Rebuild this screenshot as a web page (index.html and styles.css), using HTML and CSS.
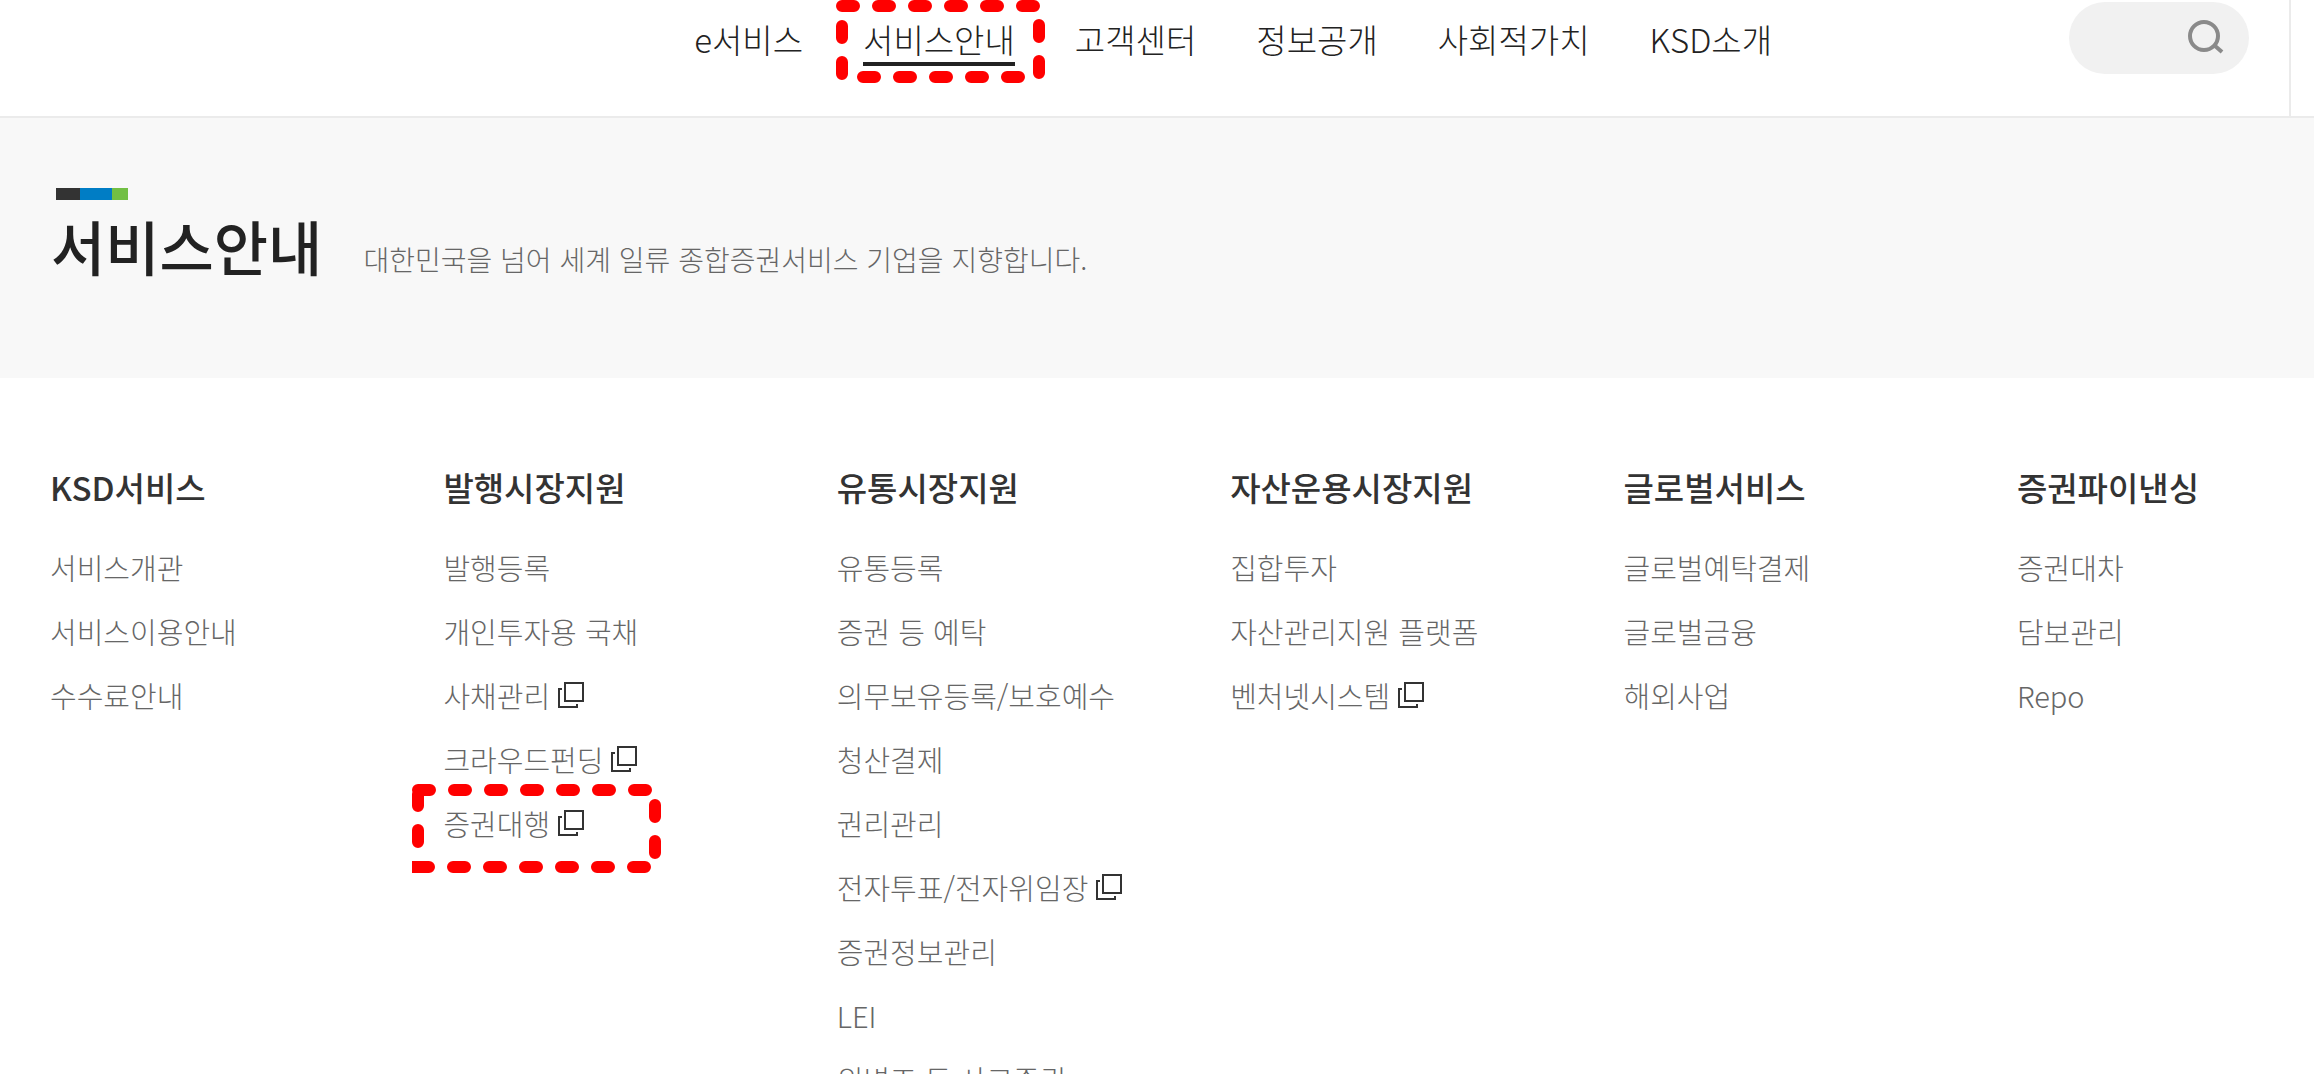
FILE: index.html
```html
<!DOCTYPE html>
<html lang="ko">
  <head>
    <meta charset="UTF-8" />
    <meta name="viewport" content="width=device-width, initial-scale=1.0" />
    <title>서비스안내</title>
    <link rel="stylesheet" href="styles.css">
  </head>
  <body>
    <svg class="defs" aria-hidden="true">
      <symbol id="newWindow" viewBox="0 0 26 26">
        <path d="M7 1H25V19H7Z M4 7H1V25H19V22" fill="none" stroke="#333" stroke-width="2" />
      </symbol>
    </svg>

    <header class="header">
      <nav class="gnb">
        <a href="#">e서비스</a>
        <div class="marked">
          <a href="#" class="active">서비스안내</a>
          <svg class="mark mark-menu" viewBox="0 0 210 84" aria-hidden="true">
            <path d="M6 6H200 M203 25V80 M27 77H188 M6 26V80" />
          </svg>
        </div>
        <a href="#">고객센터</a>
        <a href="#">정보공개</a>
        <a href="#">사회적가치</a>
        <a href="#">KSD소개</a>
      </nav>
      <form class="search">
        <input type="text" aria-label="검색어">
        <button type="button" aria-label="검색">
          <svg viewBox="0 0 40 40" aria-hidden="true">
            <circle cx="19" cy="20" r="14" />
            <path d="M29 29L37 36" />
          </svg>
        </button>
      </form>
    </header>

    <section class="banner">
      <div class="bars"><i></i><i></i><i></i></div>
      <div class="banner-text">
        <h1>서비스안내</h1>
        <p>대한민국을 넘어 세계 일류 종합증권서비스 기업을 지향합니다.</p>
      </div>
    </section>

    <main class="sitemap">
      <section>
        <h2>KSD서비스</h2>
        <ul>
          <li><a href="#">서비스개관</a></li>
          <li><a href="#">서비스이용안내</a></li>
          <li><a href="#">수수료안내</a></li>
        </ul>
      </section>
      <section>
        <h2>발행시장지원</h2>
        <ul>
          <li><a href="#">발행등록</a></li>
          <li><a href="#">개인투자용 국채</a></li>
          <li><a href="#">사채관리<svg class="icon"><use href="#newWindow" /></svg></a></li>
          <li><a href="#">크라우드펀딩<svg class="icon"><use href="#newWindow" /></svg></a></li>
          <li class="marked">
            <a href="#">증권대행<svg class="icon"><use href="#newWindow" /></svg></a>
            <svg class="mark mark-item" viewBox="0 0 250 90" aria-hidden="true">
              <path d="M6 6H236 M6 10V22 M6 46V60 M243 21V75 M5 83H236" />
              <path class="corner" d="M0 77H8V89H0Z" />
            </svg>
          </li>
        </ul>
      </section>
      <section>
        <h2>유통시장지원</h2>
        <ul>
          <li><a href="#">유통등록</a></li>
          <li><a href="#">증권 등 예탁</a></li>
          <li><a href="#">의무보유등록/보호예수</a></li>
          <li><a href="#">청산결제</a></li>
          <li><a href="#">권리관리</a></li>
          <li><a href="#">전자투표/전자위임장<svg class="icon"><use href="#newWindow" /></svg></a></li>
          <li><a href="#">증권정보관리</a></li>
          <li><a href="#">LEI</a></li>
          <li><a href="#">위변조 등 사고증권</a></li>
        </ul>
      </section>
      <section>
        <h2>자산운용시장지원</h2>
        <ul>
          <li><a href="#">집합투자</a></li>
          <li><a href="#">자산관리지원 플랫폼</a></li>
          <li><a href="#">벤처넷시스템<svg class="icon"><use href="#newWindow" /></svg></a></li>
        </ul>
      </section>
      <section>
        <h2>글로벌서비스</h2>
        <ul>
          <li><a href="#">글로벌예탁결제</a></li>
          <li><a href="#">글로벌금융</a></li>
          <li><a href="#">해외사업</a></li>
        </ul>
      </section>
      <section>
        <h2>증권파이낸싱</h2>
        <ul>
          <li><a href="#">증권대차</a></li>
          <li><a href="#">담보관리</a></li>
          <li><a href="#">Repo</a></li>
        </ul>
      </section>
    </main>
  </body>
</html>
```
FILE: styles.css
```css
* {
  box-sizing: border-box;
}
body {
  margin: 0;
  height: 100vh;
  overflow: hidden;
  font-family: "Noto Sans CJK KR", sans-serif;
  color: #222;
  background-color: #fff;
}
h1, h2, p, ul {
  margin: 0;
  padding: 0;
}
ul {
  list-style: none;
}
a {
  color: inherit;
  text-decoration: none;
}
.defs {
  display: none;
}

/* header */
.header {
  display: flex;
  height: 118px;
  padding-left: 30%;
  padding-right: 23px;
  border-bottom: 2px solid #ebebeb;
}
.gnb {
  display: flex;
  align-items: flex-start;
  gap: 60px;
  padding-top: 16px;
  font-size: 33px;
  font-weight: 300;
  line-height: 46px;
  white-space: nowrap;
}
.gnb a {
  display: block;
}
.gnb .active {
  border-bottom: 4px solid #222;
}
.search {
  display: flex;
  margin-left: auto;
  padding: 2px 40px 0 0;
  border-right: 2px solid #ebebeb;
}
.search input {
  width: 110px;
  height: 72px;
  padding: 0 0 0 30px;
  border: none;
  border-radius: 36px 0 0 36px;
  background-color: #f1f1f1;
  font-size: 28px;
}
.search button {
  width: 70px;
  height: 72px;
  padding: 0;
  border: none;
  border-radius: 0 36px 36px 0;
  background-color: #f1f1f1;
  cursor: pointer;
}
.search svg {
  display: block;
  width: 40px;
  height: 40px;
  margin: 0 0 4px 6px;
  fill: none;
  stroke: #8a8a8a;
  stroke-width: 4;
}

/* banner */
.banner {
  height: 260px;
  padding: 70px 51px 0;
  background-color: #f8f8f8;
}
.bars {
  display: flex;
  height: 12px;
  padding-left: 5px;
}
.bars i {
  width: 24px;
  background-color: #333;
}
.bars i:nth-child(2) {
  width: 32px;
  background-color: #007dc5;
}
.bars i:nth-child(3) {
  width: 16px;
  background-color: #72bf44;
}
.banner-text {
  display: flex;
  align-items: baseline;
  gap: 41px;
}
.banner h1 {
  font-size: 59px;
  font-weight: 500;
  line-height: 92px;
}
.banner p {
  font-size: 28px;
  font-weight: 300;
  color: #666;
}

/* menu columns */
.sitemap {
  display: grid;
  grid-template-columns: repeat(6, 17vw);
  padding: 85px 0 0 50px;
  white-space: nowrap;
}
.sitemap h2 {
  margin-bottom: 24px;
  font-size: 33px;
  font-weight: 500;
  line-height: 48px;
  color: #333;
}
.sitemap li {
  height: 64px;
  font-size: 29px;
  font-weight: 300;
  line-height: 64px;
  color: #666;
}
.sitemap a {
  display: inline-flex;
  align-items: center;
  gap: 8px;
}
.icon {
  width: 26px;
  height: 26px;
}

/* red dashed marks */
.marked {
  position: relative;
}
.mark {
  position: absolute;
  fill: none;
  stroke: #f00;
  stroke-width: 12;
  stroke-linecap: round;
  stroke-dasharray: 12 24;
  pointer-events: none;
}
.mark .corner {
  fill: #f00;
  stroke: none;
}
.mark-menu {
  top: -16px;
  left: -27px;
  width: 210px;
  height: 84px;
}
.mark-item {
  top: -7px;
  left: -31px;
  width: 250px;
  height: 90px;
}
```
